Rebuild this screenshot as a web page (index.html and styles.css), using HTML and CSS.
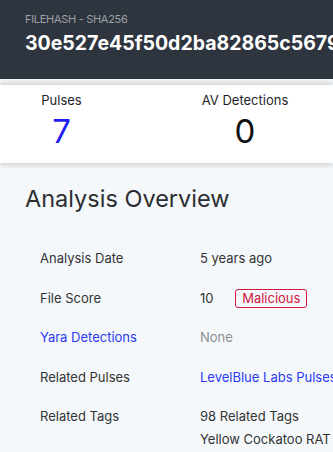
FILE: index.html
```html
<!DOCTYPE html>
<html lang="en">
<head>
    <meta charset="UTF-8">
    <meta name="viewport" content="width=device-width, initial-scale=1.0">
    <title>FileHash - SHA256</title>
    <link rel="stylesheet" href="styles.css">
</head>
<body>
    <div class="header">
        <div class="hash-type">FILEHASH - SHA256</div>
        <div class="hash">30e527e45f50d2ba82865c56792f1a3c</div>
    </div>

    <div class="stats">
        <div class="stat pulses">
            <div class="stat-label">Pulses</div>
            <div class="stat-value blue">7</div>
        </div>
        <div class="stat av">
            <div class="stat-label">AV Detections</div>
            <div class="stat-value">0</div>
        </div>
    </div>

    <div class="overview">
        <h2>Analysis Overview</h2>
        <div class="rows">
            <div class="row">
                <div class="label">Analysis Date</div>
                <div class="value">5 years ago</div>
            </div>
            <div class="row">
                <div class="label">File Score</div>
                <div class="value">10 <span class="badge">Malicious</span></div>
            </div>
            <div class="row">
                <div class="label link">Yara Detections</div>
                <div class="value muted">None</div>
            </div>
            <div class="row">
                <div class="label">Related Pulses</div>
                <div class="value link">LevelBlue Labs Pulses</div>
            </div>
            <div class="row tags">
                <div class="label">Related Tags</div>
                <div class="value">
                    <div>98 Related Tags</div>
                    <div class="tag-line">Yellow Cockatoo RAT</div>
                </div>
            </div>
        </div>
    </div>
</body>
</html>
```

FILE: styles.css
```css
body {
    margin: 0;
    font-family: Inter, "Noto Sans", sans-serif;
    background-color: #f5f8fa;
    color: #222;
    overflow: hidden;
    width: 333px;
    height: 452px;
}

.header {
    background-color: #2f353e;
    color: #fff;
    padding: 12px 25px 0;
    height: 67px;
    white-space: nowrap;
    overflow: hidden;
}

.hash-type {
    font-size: 11px;
    color: #9ba0a7;
    letter-spacing: -0.3px;
    line-height: 14px;
}

.hash {
    font-size: 19.5px;
    font-weight: 700;
    line-height: 24px;
    margin-top: 5px;
}

.stats {
    display: grid;
    grid-template-columns: 123px 244px;
    background-color: #fff;
    height: 78px;
    margin-top: 6px;
    box-shadow: 0 -3px 4px rgba(0, 0, 0, 0.12), 0 3px 4px rgba(0, 0, 0, 0.12);
    text-align: center;
    position: relative;
}

.stat-label {
    font-size: 13px;
    line-height: 16px;
    margin-top: 7px;
    color: #1e1e2a;
}

.stat-value {
    font-size: 33px;
    line-height: 40px;
    margin-top: 3px;
    color: #111;
}

.stat-value.blue {
    color: #1e1ef0;
}

.overview {
    padding: 21px 25px 0;
}

h2 {
    font-size: 23.5px;
    font-weight: 400;
    margin: 0;
    line-height: 30px;
    color: #2a2e33;
}

.rows {
    margin-top: 35px;
    padding-left: 15px;
}

.row {
    display: grid;
    grid-template-columns: 160px auto;
    font-size: 13px;
    line-height: 18px;
    height: 39.5px;
    white-space: nowrap;
    color: #333;
}

.value {
    color: #333;
}

.link {
    color: #2b3af5;
}

.muted {
    color: #8a8f96;
}

.badge {
    display: inline-block;
    color: #d2163f;
    border: 1px solid #d2163f;
    border-radius: 3px;
    padding: 0 6px;
    margin-left: 18px;
    line-height: 17px;
}

.tag-line {
    margin-top: 5px;
}
```
